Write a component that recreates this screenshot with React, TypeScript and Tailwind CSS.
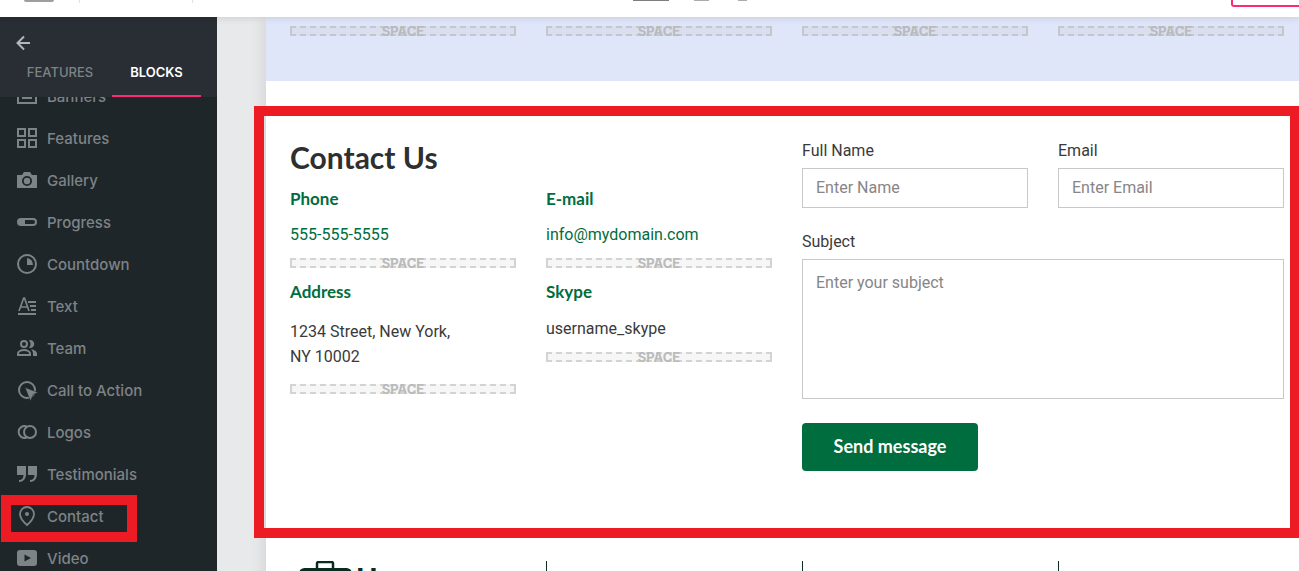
import { useState, type ReactNode } from "react";

type Block = { name: string; icon: ReactNode };

// Sidebar icons, all drawn on a 20x20 grid
const blocks: Block[] = [
  {
    name: "Banners",
    icon: (
      <>
        <rect x="1" y="3" width="18" height="14" fill="none" stroke="currentColor" strokeWidth="2" />
        <path d="M5 11h10v2H5z" />
      </>
    ),
  },
  {
    name: "Features",
    icon: (
      <path
        d="M1 1h7v7H1zM12 1h7v7h-7zM1 12h7v7H1zM12 12h7v7h-7z"
        fill="none"
        stroke="currentColor"
        strokeWidth="2"
      />
    ),
  },
  {
    name: "Gallery",
    icon: (
      <path
        fillRule="evenodd"
        d="M7 2h6l2 3h5v13H0V5h5zM10 6a5 5 0 1 0 0 10a5 5 0 0 0 0-10zM10 7.800a3.200 3.200 0 1 1 0 6.400a3.200 3.200 0 0 1 0-6.400z"
      />
    ),
  },
  {
    name: "Progress",
    icon: (
      <>
        <rect x="1" y="7" width="18" height="6" rx="3" fill="none" stroke="currentColor" strokeWidth="2" />
        <path d="M4 7h4v6H4a3 3 0 0 1 0-6z" />
      </>
    ),
  },
  {
    name: "Countdown",
    icon: (
      <>
        <circle cx="10" cy="10" r="9" fill="none" stroke="currentColor" strokeWidth="2" />
        <path d="M10 4a7 7 0 0 1 6 7h-6z" />
      </>
    ),
  },
  {
    name: "Text",
    icon: (
      <>
        <path d="M2 15L6.700 2h.8L12 15M3.500 11h7" fill="none" stroke="currentColor" strokeWidth="1.700" />
        <path d="M11 5h8v2h-8zM13 9h6v2h-6zM14 13h5v2h-5zM1 17h18v2H1z" />
      </>
    ),
  },
  {
    name: "Team",
    icon: (
      <>
        <circle cx="7" cy="6" r="3" fill="none" stroke="currentColor" strokeWidth="2" />
        <path
          d="M1 17v-1.500c0-2 3-3.500 6-3.500s6 1.500 6 3.500V17z"
          fill="none"
          stroke="currentColor"
          strokeWidth="2"
        />
        <path d="M12 2.200a4 4 0 1 1 0 7.600a6 6 0 0 0 0-7.600zM14 11.200c3 .5 6 2 6 4.300V18h-4v-2.500c0-1.700-.7-3-2-4.300z" />
      </>
    ),
  },
  {
    name: "Call to Action",
    icon: (
      <>
        <circle cx="10" cy="10" r="8" fill="none" stroke="currentColor" strokeWidth="2" />
        <path d="M8 7.500L21 12.500l-5 2l-2.500 6.500z" stroke="#1f2629" strokeWidth="0.500" />
      </>
    ),
  },
  {
    name: "Logos",
    icon: (
      <g fill="none" stroke="currentColor" strokeWidth="2">
        <circle cx="13" cy="10" r="6" />
        <path d="M9.500 4.300A6 6 0 1 0 9.500 15.700" />
      </g>
    ),
  },
  {
    name: "Testimonials",
    icon: <path d="M0 2h9v8c0 5-3 8-7 8v-2c3 0 4.500-2 4.500-5H0zM11 2h9v8c0 5-3 8-7 8v-2c3 0 4.500-2 4.500-5H11z" />,
  },
  {
    name: "Contact",
    icon: (
      <>
        <path
          d="M10 1a7 7 0 0 0-7 7c0 4 3.500 8 7 11c3.500-3 7-7 7-11a7 7 0 0 0-7-7z"
          fill="none"
          stroke="currentColor"
          strokeWidth="1.800"
        />
        <circle cx="10" cy="8" r="2" />
      </>
    ),
  },
  {
    name: "Video",
    icon: <path fillRule="evenodd" d="M3 2h14a3 3 0 0 1 3 3v10a3 3 0 0 1-3 3H3a3 3 0 0 1-3-3V5a3 3 0 0 1 3-3zM7.500 6.500v7l6.500-3.500z" />,
  },
];

const headingFont = "font-['Lato',sans-serif] font-bold";
const fieldStyle =
  "block w-full border border-[#c8c8c8] bg-white px-[13px] text-base text-[#333] placeholder:text-[#868686] focus:outline-none";

function Space() {
  return (
    <div className="flex h-[10px] items-center justify-center border-2 border-dashed border-[#aaa]/45 bg-[#aaa]/10 font-['Inter',sans-serif] text-[13px] leading-none font-bold text-[#b9babb]">
      SPACE
    </div>
  );
}

function TopBar() {
  return (
    <header className="relative z-10 flex h-[17px] shrink-0 items-start bg-white shadow-[0_0_8px_rgba(0,0,0,0.15)]">
      <div className="flex flex-1 items-start">
        <span className="ml-6 h-[2px] w-[30px] rounded-b-sm bg-[#9b9fa2]" />
        <span className="ml-[25px] h-[3px] w-px bg-[#dfe0e1]" />
        <span className="ml-[112px] h-[3px] w-px bg-[#dfe0e1]" />
      </div>
      <div className="flex items-start pl-20">
        <span className="h-px w-9 bg-[#7b7f82]" />
        <span className="ml-[25px] h-px w-[15px] bg-[#a9acae]" />
        <span className="ml-[29px] h-px w-[9px] bg-[#a9acae]" />
      </div>
      <div className="flex flex-1 justify-end overflow-hidden">
        <button
          aria-label="Publish"
          className="-mr-1 h-[7px] w-[72px] rounded-b-[3px] border-2 border-t-0 border-[#fb2b74]"
        />
      </div>
    </header>
  );
}

function Sidebar() {
  const [tab, setTab] = useState("BLOCKS");

  return (
    <aside className="flex w-[217px] shrink-0 flex-col bg-[#1f2629] font-['Inter',sans-serif]">
      <div className="flex h-20 shrink-0 flex-col bg-[#282e33]">
        <button aria-label="Back" className="mt-[18px] ml-4 w-4 text-[#b3b7b9]">
          <svg width="16" height="16" viewBox="0 0 16 16" fill="none" stroke="currentColor" strokeWidth="2">
            <path d="M14 8H2M8 1.500L1.500 8L8 14.500" />
          </svg>
        </button>
        <div className="flex flex-1 pl-2 text-[13px]">
          {["FEATURES", "BLOCKS"].map((name) => (
            <button
              key={name}
              onClick={() => setTab(name)}
              className={`border-b-2 ${name === "FEATURES" ? "w-[104px]" : "w-[89px]"} ${
                tab === name
                  ? "border-[#fb2b74] font-semibold text-white"
                  : "border-transparent font-medium text-[#7d8386]"
              }`}
            >
              {name}
            </button>
          ))}
        </div>
      </div>
      <nav className="min-h-0 flex-1 overflow-hidden">
        <ul className="-mt-[22px]">
          {blocks.map(({ name, icon }) => (
            <li key={name} className="relative">
              <a href="#" className="flex h-[42px] items-center gap-[10px] pl-[17px] text-[15px] font-medium text-[#7d8386]">
                <svg className="overflow-visible" width="20" height="20" viewBox="0 0 20 20" fill="currentColor">
                  {icon}
                </svg>
                <span className="pt-0.5">{name}</span>
              </a>
              {name === "Contact" && (
                <div className="pointer-events-none absolute top-0 left-px h-[47px] w-[136px] border-10 border-[#ed1c24]" />
              )}
            </li>
          ))}
        </ul>
      </nav>
    </aside>
  );
}

function ContactInfo() {
  const label = `${headingFont} text-[17px] leading-6 text-[#006d3f]`;

  return (
    <div className="col-span-2 pt-[59px]">
      <h2 className={`${headingFont} text-[30px] leading-[34px] text-[#2f2f2f]`}>Contact Us</h2>
      <div className="mt-[13px] grid grid-cols-2 gap-x-[30px] gap-y-3">
        <div>
          <h3 className={label}>Phone</h3>
          <a href="tel:555-555-5555" className="mt-[11px] mb-[10px] block leading-[26px] text-[#006d3f]">
            555-555-5555
          </a>
          <Space />
        </div>
        <div>
          <h3 className={label}>E-mail</h3>
          <a href="mailto:info@mydomain.com" className="mt-[11px] mb-[10px] block leading-[26px] text-[#006d3f]">
            info@mydomain.com
          </a>
          <Space />
        </div>
        <div>
          <h3 className={label}>Address</h3>
          <p className="my-[15px] leading-[25px]">
            1234 Street, New York,
            <br />
            NY 10002
          </p>
          <Space />
        </div>
        <div>
          <h3 className={label}>Skype</h3>
          <p className="mt-3 mb-[10px] leading-[26px]">username_skype</p>
          <Space />
        </div>
      </div>
    </div>
  );
}

function ContactForm() {
  return (
    <form className="col-span-2 pt-[57px]" onSubmit={(e) => e.preventDefault()}>
      <div className="grid grid-cols-2 gap-[30px]">
        <div>
          <label htmlFor="name" className="mb-1 block leading-[26px]">
            Full Name
          </label>
          <input id="name" type="text" placeholder="Enter Name" className={`${fieldStyle} h-10 pb-0.5`} />
        </div>
        <div>
          <label htmlFor="email" className="mb-1 block leading-[26px]">
            Email
          </label>
          <input id="email" type="email" placeholder="Enter Email" className={`${fieldStyle} h-10 pb-0.5`} />
        </div>
      </div>
      <label htmlFor="subject" className="mt-[21px] mb-1 block leading-[26px]">
        Subject
      </label>
      <textarea
        id="subject"
        placeholder="Enter your subject"
        className={`${fieldStyle} h-[140px] resize-none py-[11px] leading-6`}
      />
      <button className={`${headingFont} mt-6 h-12 w-44 rounded bg-[#006d3f] pb-0.5 text-[18px] text-white`}>
        Send message
      </button>
    </form>
  );
}

function Canvas() {
  return (
    <main className="min-w-0 flex-1 overflow-hidden bg-[#e8e9eb] pl-[49px]">
      <div className="min-h-full bg-white font-['Roboto',sans-serif] text-base text-[#3a3a3a] shadow-[0_0_16px_rgba(0,0,0,0.12)]">
        <section className="grid h-16 grid-cols-4 gap-[30px] bg-[#e0e6f9] pt-[9px] pr-[15px] pl-6">
          <Space />
          <Space />
          <Space />
          <Space />
        </section>

        <section className="relative grid grid-cols-4 gap-[30px] pr-[15px] pb-[90px] pl-6">
          <ContactInfo />
          <ContactForm />
          {/* highlight around the contact block */}
          <div className="pointer-events-none absolute top-[25px] -right-px bottom-[23px] -left-3 border-10 border-[#ed1c24]" />
        </section>

        <section className="grid grid-cols-4 gap-[30px] pr-[15px] pl-6 text-[#0b2a22]">
          <div className="flex h-20 items-start gap-1 pl-2">
            <svg width="54" height="48" viewBox="0 0 54 48" fill="none" stroke="currentColor">
              <path d="M19 8V2.500Q19 1 20.500 1H33.500Q35 1 35 2.500V8" strokeWidth="2.500" />
              <rect x="2.500" y="8.500" width="50" height="38" rx="4" strokeWidth="3" />
            </svg>
            <span className="font-['Lato',sans-serif] text-[28px] leading-[34px] font-black">H</span>
          </div>
          <div className="border-l border-current" />
          <div className="border-l border-current" />
          <div className="border-l border-current" />
        </section>
      </div>
    </main>
  );
}

export default function App() {
  return (
    <div className="flex h-screen flex-col overflow-hidden">
      <TopBar />
      <div className="flex min-h-0 flex-1">
        <Sidebar />
        <Canvas />
      </div>
    </div>
  );
}
